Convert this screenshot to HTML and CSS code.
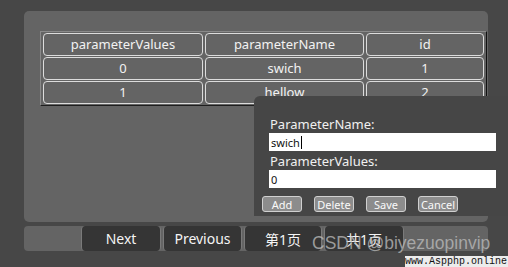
FILE: index.html
```html
<!DOCTYPE html>
<html>
<head>
<meta charset="utf-8">
<link rel="stylesheet" href="styles.css">
</head>
<body>
<div class="page">
  <div class="panel">
    <table class="grid">
      <thead>
        <tr><th class="c1">parameterValues</th><th class="c2">parameterName</th><th class="c3">id</th></tr>
      </thead>
      <tbody>
        <tr><td>0</td><td>swich</td><td>1</td></tr>
        <tr><td>1</td><td>hellow</td><td>2</td></tr>
      </tbody>
    </table>
  </div>
  <div class="pager">
    <span class="pbtn w80">Next</span>
    <span class="pbtn w79">Previous</span>
    <span class="pbtn w78">第1页</span>
    <span class="pbtn w80">共1页</span>
  </div>
</div>

<div class="dialog">
  <label class="lbl">ParameterName:</label>
  <div class="field"><span class="val">swich</span><span class="caret"></span></div>
  <label class="lbl">ParameterValues:</label>
  <div class="field"><span class="val">0</span></div>
  <div class="actions">
    <span class="btn">Add</span>
    <span class="btn">Delete</span>
    <span class="btn">Save</span>
    <span class="btn">Cancel</span>
  </div>
</div>

<div class="wm1">CSDN @biyezuopinvip</div>
<div class="wm2">www.Aspphp.online</div>
</body>
</html>
```
FILE: styles.css
```css
html, body {
  margin: 0;
  padding: 0;
  background: #474747;
  width: 508px;
  height: 267px;
  overflow: hidden;
  font-family: "Noto Sans", "Noto Sans CJK SC", sans-serif;
}
.page {
  padding: 11px 0 0 24px;
  width: 464px;
}
.panel {
  background: #646464;
  border-radius: 5px;
  height: 211px;
  padding: 20px 0 0 16px;
  box-sizing: border-box;
}
.grid {
  border-collapse: separate;
  border-spacing: 2px 1px;
  border: 1px solid;
  border-color: #8a8a8a #111 #1e1e1e #8a8a8a;
  width: 447px;
  table-layout: fixed;
}
.grid th, .grid td {
  border: 1px solid #dcdcdc;
  border-radius: 4px;
  height: 21px;
  padding: 0;
  text-align: center;
  color: #f2f2f2;
  font-size: 13px;
  font-weight: normal;
  line-height: 21px;
}
.c1 { width: 158px; }
.c2 { width: 157px; }
.c3 { width: 116px; }
.pager {
  margin-top: 4px;
  height: 25px;
  background: #646464;
  border-radius: 4px;
  display: flex;
  gap: 2px;
  padding-left: 57px;
}
.pbtn {
  background: #353535;
  color: #f4f4f4;
  font-size: 14px;
  border-radius: 4px;
  display: flex;
  align-items: center;
  justify-content: center;
  border-left: 1px solid #7a7a7a;
  border-right: 1px solid #7a7a7a;
  box-sizing: border-box;
}
.w80 { width: 80px; }
.w79 { width: 79px; }
.w78 { width: 78px; }
.dialog {
  position: absolute;
  left: 254px;
  top: 96px;
  width: 260px;
  height: 120px;
  background: #464646;
  border-top-left-radius: 6px;
  box-sizing: border-box;
  padding: 20px 0 0 8px;
  display: flex;
  flex-direction: column;
}
.lbl {
  color: #f0f0f0;
  font-size: 13px;
  line-height: 17px;
  padding-left: 8px;
}
.field {
  margin-left: 7px;
  width: 227px;
  height: 18px;
  background: #fff;
  display: flex;
  align-items: center;
  padding-left: 2px;
  box-sizing: border-box;
  margin-bottom: 2px;
}
.val {
  color: #111;
  font-size: 11px;
}
.caret {
  width: 1px;
  height: 13px;
  background: #000;
  margin-left: 1px;
}
.actions {
  display: flex;
  gap: 12px;
  margin-top: 6px;
}
.btn {
  width: 40px;
  height: 16px;
  box-sizing: border-box;
  background: #8c8c8c;
  border: 1px solid #d0d0d0;
  border-radius: 3px;
  color: #fafafa;
  font-size: 11px;
  display: flex;
  align-items: center;
  justify-content: center;
}
.wm1 {
  position: absolute;
  left: 312px;
  top: 233px;
  font-family: "Liberation Sans", sans-serif;
  font-size: 17.5px;
  color: rgba(190, 190, 190, 0.75);
  white-space: nowrap;
}
.wm2 {
  position: absolute;
  left: 405px;
  top: 256px;
  width: 103px;
  height: 11px;
  background: #ececec;
  color: #111;
  font-family: "Liberation Mono", monospace;
  font-size: 10px;
  line-height: 11px;
  white-space: nowrap;
}
```
